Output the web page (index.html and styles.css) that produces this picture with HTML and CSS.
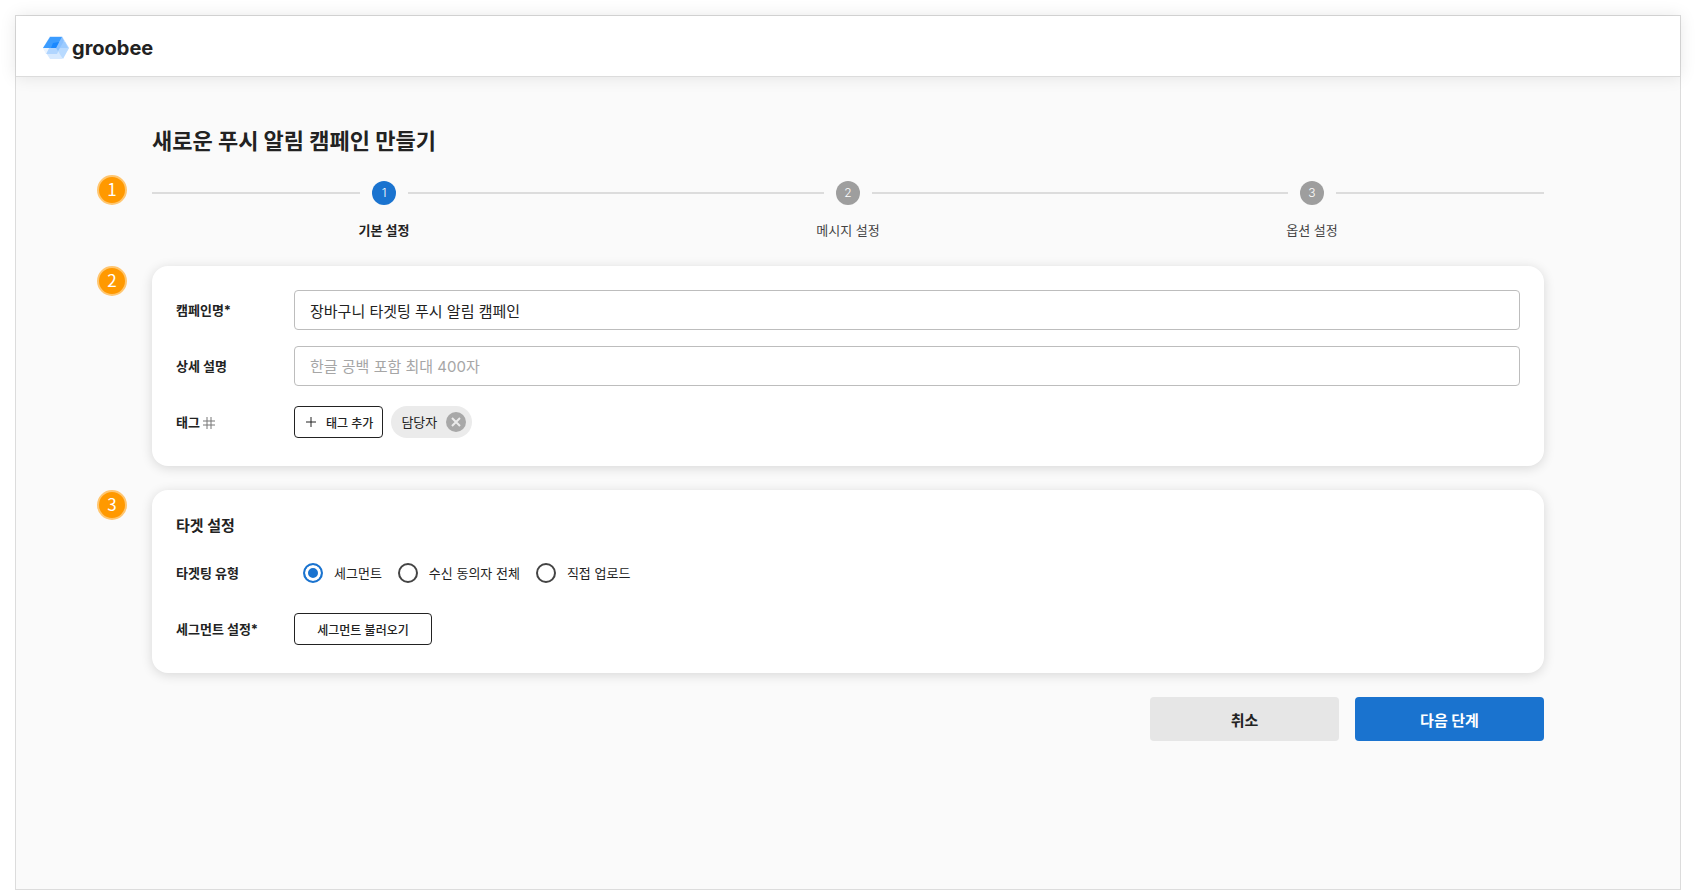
FILE: index.html
```html
<!DOCTYPE html>
<html lang="ko">

<head>
    <meta charset="utf-8">
    <meta name="viewport" content="width=device-width, initial-scale=1">
    <title>새로운 푸시 알림 캠페인 만들기</title>
    <link rel="stylesheet" href="styles.css">
</head>

<body>
    <div class="frame">
        <header class="header">
            <a class="logo" href="#">
                <svg class="logo-mark" width="26" height="24" viewBox="0 0 26 24" aria-hidden="true">
                    <polygon points="7,0 19,0 26,12 19,23 7,23 0,12" fill="#d6e9ff"/>
                    <polygon points="19,1 26,12 20,23 13,12" fill="#b8daff"/>
                    <polygon points="17,6 22,6 25,12 13,12" fill="#9ccbff"/>
                    <polygon points="13,12 17,12 14,18 3,18 6,12" fill="#b0d5ff"/>
                    <polygon points="0,12 6,12 3,18" fill="#eaf4ff"/>
                    <polygon points="19,1 21,5 15,15 13,12" fill="#8ac1ff"/>
                    <polygon points="7,1 19,1 13,12 0,12" fill="#3b9cff"/>
                    <polygon points="10,7 16,6 13,12 8,12" fill="#1a88ff"/>
                </svg>
                <span class="logo-text">groobee</span>
            </a>
        </header>
        <main class="content">
            <h1 class="title">새로운 푸시 알림 캠페인 만들기</h1>

            <section class="section">
                <span class="badge">1</span>
                <ol class="steps">
                    <li class="step active">
                        <div class="step-line"><span class="step-number">1</span></div>
                        <span class="step-name">기본 설정</span>
                    </li>
                    <li class="step">
                        <div class="step-line"><span class="step-number">2</span></div>
                        <span class="step-name">메시지 설정</span>
                    </li>
                    <li class="step">
                        <div class="step-line"><span class="step-number">3</span></div>
                        <span class="step-name">옵션 설정</span>
                    </li>
                </ol>
            </section>

            <form>
                <section class="section card">
                    <span class="badge">2</span>
                    <div class="row">
                        <label class="label" for="campaign-name">캠페인명*</label>
                        <input class="input" id="campaign-name" type="text" value="장바구니 타겟팅 푸시 알림 캠페인">
                    </div>
                    <div class="row">
                        <label class="label" for="description">상세 설명</label>
                        <input class="input" id="description" type="text" placeholder="한글 공백 포함 최대 400자">
                    </div>
                    <div class="row">
                        <span class="label">태그
                            <svg class="hash" width="12" height="12" viewBox="0 0 12 12" aria-hidden="true">
                                <path d="M4 0v12M8 0v12M0 4h12M0 8h12"/>
                            </svg>
                        </span>
                        <div class="tags">
                            <button class="button-outline button-tag" type="button">
                                <svg class="plus" width="10" height="10" viewBox="0 0 10 10" aria-hidden="true">
                                    <path d="M5 0v10M0 5h10"/>
                                </svg>
                                태그 추가
                            </button>
                            <span class="chip">담당자
                                <button class="chip-delete" type="button" aria-label="태그 삭제">
                                    <svg width="20" height="20" viewBox="0 0 20 20" aria-hidden="true">
                                        <circle cx="10" cy="10" r="10"/>
                                        <path d="M6 6l8 8M14 6l-8 8"/>
                                    </svg>
                                </button>
                            </span>
                        </div>
                    </div>
                </section>

                <section class="section card">
                    <span class="badge">3</span>
                    <h2 class="card-title">타겟 설정</h2>
                    <div class="row" role="radiogroup" aria-labelledby="target-type">
                        <span class="label" id="target-type">타겟팅 유형</span>
                        <div class="radios">
                            <label class="radio"><input type="radio" name="target" checked>세그먼트</label>
                            <label class="radio"><input type="radio" name="target">수신 동의자 전체</label>
                            <label class="radio"><input type="radio" name="target">직접 업로드</label>
                        </div>
                    </div>
                    <div class="row">
                        <span class="label">세그먼트 설정*</span>
                        <button class="button-outline button-segment" type="button">세그먼트 불러오기</button>
                    </div>
                </section>

                <div class="actions">
                    <button class="button" type="button">취소</button>
                    <button class="button primary" type="submit">다음 단계</button>
                </div>
            </form>
        </main>
    </div>
</body>

</html>
```
FILE: styles.css
```css
* {
    box-sizing: border-box;
}

body {
    margin: 0;
    padding: 15px 15px 0;
    background-color: #ffffff;
    color: #222222;
    font-family: Inter, "Noto Sans CJK KR", sans-serif;
    font-size: 13px;
    line-height: 20px;
}

button,
input {
    margin: 0;
    font-family: inherit;
    color: inherit;
}

button {
    padding: 0;
    cursor: pointer;
}

.frame {
    min-height: calc(100vh - 15px);
    border: 1px solid #dcdcdc;
    background-color: #fafafa;
}

.header {
    display: flex;
    align-items: center;
    height: 61px;
    padding: 0 27px;
    border-bottom: 1px solid #dcdcdc;
    background-color: #ffffff;
    box-shadow: 0 0 16px rgba(0, 0, 0, 0.1);
}

.logo {
    display: flex;
    align-items: center;
    gap: 3px;
    padding-top: 4px;
    color: #222222;
    text-decoration: none;
}

.logo-text {
    font-size: 20px;
    font-weight: 700;
    line-height: 24px;
}

.content {
    padding: 48px 136px;
}

.title {
    margin: 0 0 18px;
    font-size: 22px;
    font-weight: 700;
    line-height: 32px;
}

.section {
    position: relative;
}

/* number markers in the left margin */
.badge {
    position: absolute;
    top: 0;
    left: -55px;
    width: 30px;
    height: 30px;
    border: 2px solid #ffc670;
    border-radius: 50%;
    background-color: #ff9900;
    color: #ffffff;
    font-family: "Noto Sans CJK KR", sans-serif;
    font-size: 17px;
    line-height: 24px;
    text-align: center;
}

/* steps */
.steps {
    display: flex;
    margin: 0 0 26px;
    padding: 6px 0 0;
    list-style: none;
}

.step {
    flex: 1;
    color: #444444;
    text-align: center;
}

.step-line {
    display: flex;
    align-items: center;
    gap: 12px;
    margin-bottom: 15px;
}

.step-line::before,
.step-line::after {
    content: "";
    flex: 1;
    height: 2px;
    background-color: #dcdcdc;
}

.step-number {
    width: 24px;
    height: 24px;
    border-radius: 50%;
    background-color: #9e9e9e;
    color: #ffffff;
    font-size: 12px;
    font-weight: 300;
    line-height: 24px;
}

.step.active {
    color: #222222;
    font-weight: 700;
}

.active .step-number {
    background-color: #1a73cf;
}

/* cards */
.card {
    display: flex;
    flex-direction: column;
    gap: 16px;
    margin-bottom: 24px;
    padding: 24px;
    border-radius: 16px;
    background-color: #ffffff;
    box-shadow: 0 2px 12px rgba(0, 0, 0, 0.14);
}

.card-title {
    margin: 0;
    font-size: 15px;
    font-weight: 700;
    line-height: 23px;
}

.row {
    display: flex;
    align-items: center;
    height: 40px;
}

.label {
    flex: none;
    width: 118px;
    font-weight: 700;
}

.input {
    flex: 1;
    min-width: 0;
    height: 40px;
    padding: 0 15px;
    border: 1px solid #bdbdbd;
    border-radius: 4px;
    background-color: #ffffff;
    font-size: 15px;
}

.input::placeholder {
    color: #a6a6a6;
    opacity: 1;
}

.hash,
.plus {
    fill: none;
    stroke: #777777;
}

.hash {
    vertical-align: -2px;
}

.plus {
    stroke: #222222;
}

.tags {
    display: flex;
    gap: 8px;
}

.button-outline {
    height: 32px;
    border: 1px solid #222222;
    border-radius: 4px;
    background-color: #ffffff;
    font-size: 12px;
    font-weight: 500;
}

.button-tag {
    display: flex;
    align-items: center;
    gap: 10px;
    padding: 0 9px 0 11px;
}

.button-segment {
    width: 138px;
}

.chip {
    display: flex;
    align-items: center;
    gap: 9px;
    height: 32px;
    padding: 0 6px 0 10px;
    border-radius: 16px;
    background-color: #ebebeb;
}

.chip-delete {
    display: flex;
    border: 0;
    background: none;
}

.chip-delete circle {
    fill: #a8a8a8;
}

.chip-delete path {
    stroke: #ebebeb;
    stroke-width: 2;
}

.radios {
    display: flex;
    gap: 16px;
    padding-left: 9px;
}

.radio {
    display: flex;
    align-items: center;
    gap: 11px;
}

.radio input {
    appearance: none;
    width: 20px;
    height: 20px;
    margin: 0;
    border: 2px solid #444444;
    border-radius: 50%;
    background-color: #ffffff;
}

.radio input:checked {
    border-color: #1a73cf;
    background-color: #1a73cf;
    box-shadow: inset 0 0 0 3px #ffffff;
}

/* bottom buttons */
.actions {
    display: flex;
    justify-content: flex-end;
    gap: 16px;
}

.button {
    width: 189px;
    height: 44px;
    border: 0;
    border-radius: 4px;
    background-color: #e6e6e6;
    font-size: 15px;
    font-weight: 700;
}

.button.primary {
    background-color: #1a73cf;
    color: #ffffff;
}
```
